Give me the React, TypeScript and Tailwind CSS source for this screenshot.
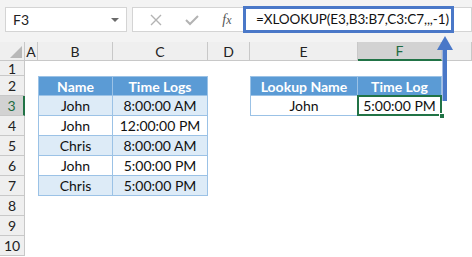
import React from "react";

const font = { fontFamily: "Lato, 'Liberation Sans', sans-serif" };

type Cell = { text: string; kind: "head" | "blue" | "white" | "sel"; left?: boolean };

// row number -> column letter -> cell
const cells: Record<number, Record<string, Cell>> = {
  2: {
    B: { text: "Name", kind: "head", left: true },
    C: { text: "Time Logs", kind: "head" },
    E: { text: "Lookup Name", kind: "head", left: true },
    F: { text: "Time Log", kind: "head" },
  },
  3: {
    B: { text: "John", kind: "blue", left: true },
    C: { text: "8:00:00 AM", kind: "blue" },
    E: { text: "John", kind: "white", left: true },
    F: { text: "5:00:00 PM", kind: "sel" },
  },
  4: {
    B: { text: "John", kind: "white", left: true },
    C: { text: "12:00:00 PM", kind: "white" },
  },
  5: {
    B: { text: "Chris", kind: "blue", left: true },
    C: { text: "8:00:00 AM", kind: "blue" },
  },
  6: {
    B: { text: "John", kind: "white", left: true },
    C: { text: "5:00:00 PM", kind: "white" },
  },
  7: {
    B: { text: "Chris", kind: "blue", left: true },
    C: { text: "5:00:00 PM", kind: "blue" },
  },
};

const cols = ["A", "B", "C", "D", "E", "F", "G"];
const rows = [1, 2, 3, 4, 5, 6, 7, 8, 9, 10];

const SheetCell = ({ cell }: { cell?: Cell }) => {
  if (!cell) return <div className="bg-white" />;
  const bg =
    cell.kind === "head"
      ? "bg-[#5b9bd5] text-white font-bold border-t"
      : cell.kind === "blue"
      ? "bg-[#ddebf7] text-[#111]"
      : "bg-white text-[#111]";
  return (
    <div
      className={`relative flex items-center justify-center border-r border-b border-[#9bc2e6] text-[14px] ${bg} ${
        cell.left ? "border-l" : ""
      }`}
    >
      {cell.text}
      {cell.kind === "sel" && (
        <>
          <div className="absolute -left-[1px] -top-[1px] -right-[1px] -bottom-[1px] border-2 border-[#217346]" />
          <div className="absolute -right-[4px] -bottom-[4px] w-[6px] h-[6px] bg-[#217346] border border-white" />
        </>
      )}
    </div>
  );
};

export default function App() {
  return (
    <div className="relative w-[472px] h-[257px] overflow-hidden bg-white" style={font}>
      {/* formula bar */}
      <div className="h-[42px] bg-[#f3f3f3] flex items-start pt-[7px] pl-[5px]">
        <div className="w-[122px] h-[25px] bg-white border border-[#d4d4d4] flex items-center justify-between px-[7px] text-[14px] text-[#222]">
          <span>F3</span>
          <span className="w-0 h-0 border-l-[4px] border-r-[4px] border-t-[4px] border-l-transparent border-r-transparent border-t-[#6a6a6a]" />
        </div>
        <div className="ml-[5px] flex-1 h-[25px] bg-white border border-[#d4d4d4] flex items-center">
          <div className="w-[110px] flex items-center justify-around pl-[6px]">
            <svg width="12" height="12" viewBox="0 0 12 12">
              <path d="M1 1 L11 11 M11 1 L1 11" stroke="#b3b3b3" strokeWidth="1.4" fill="none" />
            </svg>
            <svg width="14" height="12" viewBox="0 0 14 12">
              <path d="M1 6 L5 10 L13 2" stroke="#b3b3b3" strokeWidth="2" fill="none" />
            </svg>
            <span className="italic text-[14px] text-[#555]" style={{ fontFamily: "'Liberation Serif', serif" }}>
              f<span className="text-[12px]">x</span>
            </span>
          </div>
          <div className="w-[211px] h-[27px] border-[3px] border-[#4a78c8] bg-white flex items-center pl-[10px] text-[13.5px] tracking-[-0.1px] text-[#111] whitespace-nowrap">
            =XLOOKUP(E3,B3:B7,C3:C7,,,-1)
          </div>
        </div>
      </div>

      {/* sheet grid */}
      <div className="grid grid-cols-[25px_13px_75px_95px_42px_108px_84px_1fr] grid-rows-[19px_15px_repeat(9,20px)]">
        <div className="relative bg-[#efefef] border-r border-b border-[#c8c8c8]">
          <svg className="absolute right-[2px] bottom-[2px]" width="12" height="12" viewBox="0 0 12 12">
            <polygon points="12,0 12,12 0,12" fill="#b8b8b8" />
          </svg>
        </div>
        {cols.map((c) => (
          <div
            key={c}
            className={`flex items-center justify-center text-[14px] border-r border-[#c8c8c8] ${
              c === "F"
                ? "bg-[#d2d2d2] text-[#1e6b41] border-b-2 border-b-[#217346]"
                : "bg-[#efefef] text-[#222] border-b border-b-[#c8c8c8]"
            }`}
          >
            {c === "G" ? "" : c}
          </div>
        ))}
        {rows.map((r) => (
          <React.Fragment key={r}>
            <div
              className={`flex items-center justify-center text-[14px] border-b border-[#c8c8c8] ${
                r === 3
                  ? "bg-[#d2d2d2] text-[#1e6b41] border-r-2 border-r-[#217346]"
                  : "bg-[#efefef] text-[#222] border-r border-r-[#c8c8c8]"
              }`}
            >
              {r}
            </div>
            {cols.map((c) => (
              <SheetCell key={c} cell={cells[r]?.[c]} />
            ))}
          </React.Fragment>
        ))}
      </div>

      {/* annotation arrow */}
      <svg className="absolute left-[437px] top-[36px]" width="16" height="65" viewBox="0 0 16 65">
        <polygon points="8,0 16,14 0,14" fill="#4a78c8" />
        <rect x="5.5" y="13" width="4.5" height="52" fill="#4a78c8" />
      </svg>
    </div>
  );
}
